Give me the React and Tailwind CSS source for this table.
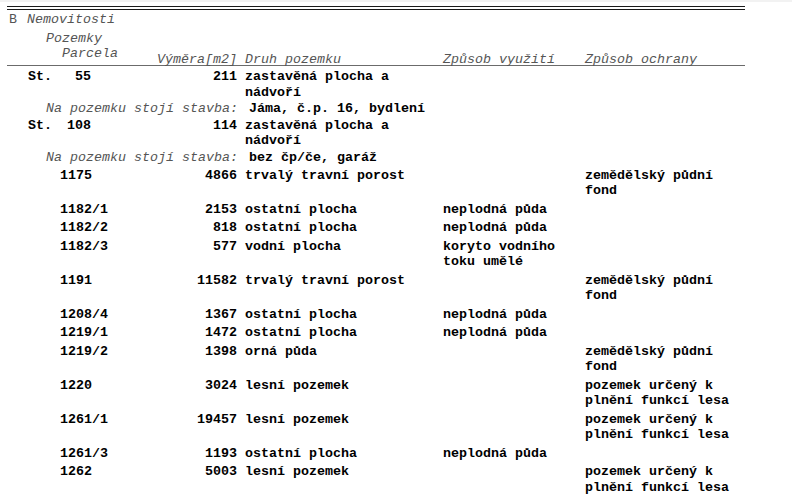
import React from "react";

const rows = [
  { st: true, p: "55", a: "211", d: "zastavěná plocha a nádvoří", stavba: "Jáma, č.p. 16, bydlení" },
  { st: true, p: "108", a: "114", d: "zastavěná plocha a nádvoří", stavba: "bez čp/če, garáž" },
  { p: "1175", a: "4866", d: "trvalý travní porost", o: "zemědělský půdní fond" },
  { p: "1182/1", a: "2153", d: "ostatní plocha", v: "neplodná půda" },
  { p: "1182/2", a: "818", d: "ostatní plocha", v: "neplodná půda" },
  { p: "1182/3", a: "577", d: "vodní plocha", v: "koryto vodního toku umělé" },
  { p: "1191", a: "11582", d: "trvalý travní porost", o: "zemědělský půdní fond" },
  { p: "1208/4", a: "1367", d: "ostatní plocha", v: "neplodná půda" },
  { p: "1219/1", a: "1472", d: "ostatní plocha", v: "neplodná půda" },
  { p: "1219/2", a: "1398", d: "orná půda", o: "zemědělský půdní fond" },
  { p: "1220", a: "3024", d: "lesní pozemek", o: "pozemek určený k plnění funkcí lesa" },
  { p: "1261/1", a: "19457", d: "lesní pozemek", o: "pozemek určený k plnění funkcí lesa" },
  { p: "1261/3", a: "1193", d: "ostatní plocha", v: "neplodná půda" },
  { p: "1262", a: "5003", d: "lesní pozemek", o: "pozemek určený k plnění funkcí lesa" },
];

const grid = "grid grid-cols-[143px_95px_198px_142px_160px]";

export default function App() {
  return (
    <div
      className="w-[792px] h-[499px] bg-white overflow-hidden text-[13.33px] text-black"
      style={{ fontFamily: '"Liberation Mono", "Courier New", monospace' }}
    >
      <div className="h-[2px] bg-[#f2f2f2]" />
      <div className="ml-[7px] w-[738px]">
        <div className="mt-[4px] h-px bg-[#1a1a1a]" />
        <div className="mt-[2px] h-px bg-[#1a1a1a]" />
        <div className="mt-[2px] leading-[15px] text-[#555] pl-[2px] flex">
          <span>B</span>
          <span className="italic ml-[10px]">Nemovitosti</span>
        </div>
        <div className={`${grid} items-end mt-[4px] border-b-[1.5px] border-[#6b6b6b] text-[#555] italic`}>
          <div className="leading-[15px] pb-[4px]">
            <div className="pl-[39px]">Pozemky</div>
            <div className="pl-[55px]">Parcela</div>
          </div>
          <div className="leading-[11px] text-right pr-[8px] whitespace-nowrap">Výměra[m2]</div>
          <div className="leading-[11px]">Druh pozemku</div>
          <div className="leading-[11px]">Způsob využití</div>
          <div className="leading-[11px]">Způsob ochrany</div>
        </div>
        <div className="font-bold leading-[15.5px] pt-[3px]">
          {rows.map((r, i) => (
            <React.Fragment key={i}>
              <div className={`${grid} ${r.st ? "" : "py-[1.5px]"}`}>
                <div className="flex">
                  {r.st ? (
                    <>
                      <span className="pl-[21px]">St.</span>
                      <span className="w-[39px] text-right">{r.p}</span>
                    </>
                  ) : (
                    <span className="pl-[53px]">{r.p}</span>
                  )}
                </div>
                <div className="text-right pr-[8px]">{r.a}</div>
                <div className="pr-[2px]">{r.d}</div>
                <div className="pr-[8px]">{r.v || ""}</div>
                <div>{r.o || ""}</div>
              </div>
              {r.stavba && (
                <div className="flex py-[1px]">
                  <span className="w-[238px] pl-[39px] italic font-normal text-[#555] whitespace-nowrap">
                    Na pozemku stojí stavba:
                  </span>
                  <span className="pl-[4px]">{r.stavba}</span>
                </div>
              )}
            </React.Fragment>
          ))}
        </div>
      </div>
    </div>
  );
}
